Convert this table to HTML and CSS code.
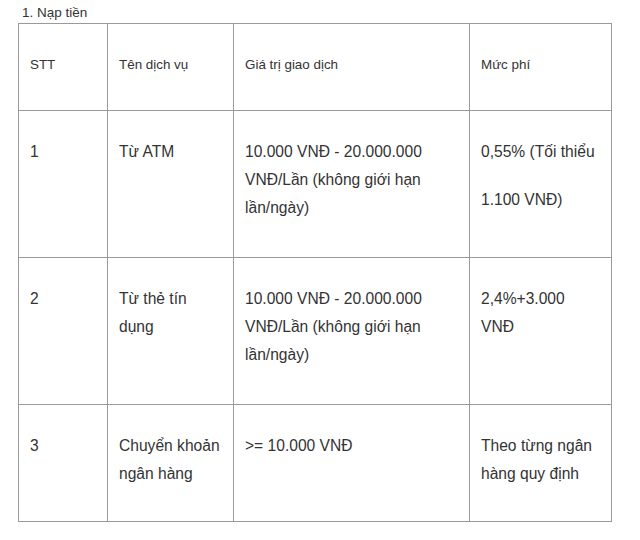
FILE: index.html
```html
<!DOCTYPE html>
<html lang="vi">
<head>
<meta charset="utf-8">
<link rel="stylesheet" href="styles.css">
</head>
<body>
<p class="title">1. Nạp tiền</p>
<table class="fees">
  <colgroup>
    <col class="c1"><col class="c2"><col class="c3"><col class="c4">
  </colgroup>
  <tr class="head">
    <td>STT</td>
    <td>Tên dịch vụ</td>
    <td>Giá trị giao dịch</td>
    <td>Mức phí</td>
  </tr>
  <tr class="r1">
    <td>1</td>
    <td>Từ ATM</td>
    <td>10.000 VNĐ - 20.000.000 VNĐ/Lần (không giới hạn lần/ngày)</td>
    <td><span class="para">0,55% (Tối thiểu</span><span class="para gap">1.100 VNĐ)</span></td>
  </tr>
  <tr class="r2">
    <td>2</td>
    <td>Từ thẻ tín dụng</td>
    <td>10.000 VNĐ - 20.000.000 VNĐ/Lần (không giới hạn lần/ngày)</td>
    <td>2,4%+3.000 VNĐ</td>
  </tr>
  <tr class="r3">
    <td>3</td>
    <td>Chuyển khoản ngân hàng</td>
    <td>&gt;= 10.000 VNĐ</td>
    <td>Theo từng ngân hàng quy định</td>
  </tr>
</table>
</body>
</html>
```
FILE: styles.css
```css
html, body {
  margin: 0;
  padding: 0;
  background: #ffffff;
}
body {
  font-family: "Liberation Sans", Arial, sans-serif;
  color: #333333;
}
.title {
  margin: 0;
  padding: 5px 0 0 22px;
  font-size: 13.5px;
  line-height: 16px;
  height: 18px;
}
.fees {
  margin-left: 18px;
  border-collapse: collapse;
  table-layout: fixed;
  width: 593px;
}
.c1 { width: 89px; }
.c2 { width: 126px; }
.c3 { width: 236px; }
.c4 { width: 142px; }
.fees td {
  border: 1px solid #9a9a9a;
  vertical-align: top;
  padding: 27px 11px 0 11px;
  font-size: 15.6px;
  line-height: 28px;
  box-sizing: border-box;
}
.head td {
  font-size: 13.4px;
  height: 87px;
}
.r1 td { height: 147px; }
.r2 td { height: 147px; }
.r3 td { height: 117px; }
.para { display: block; }
.gap { margin-top: 20px; }
```
